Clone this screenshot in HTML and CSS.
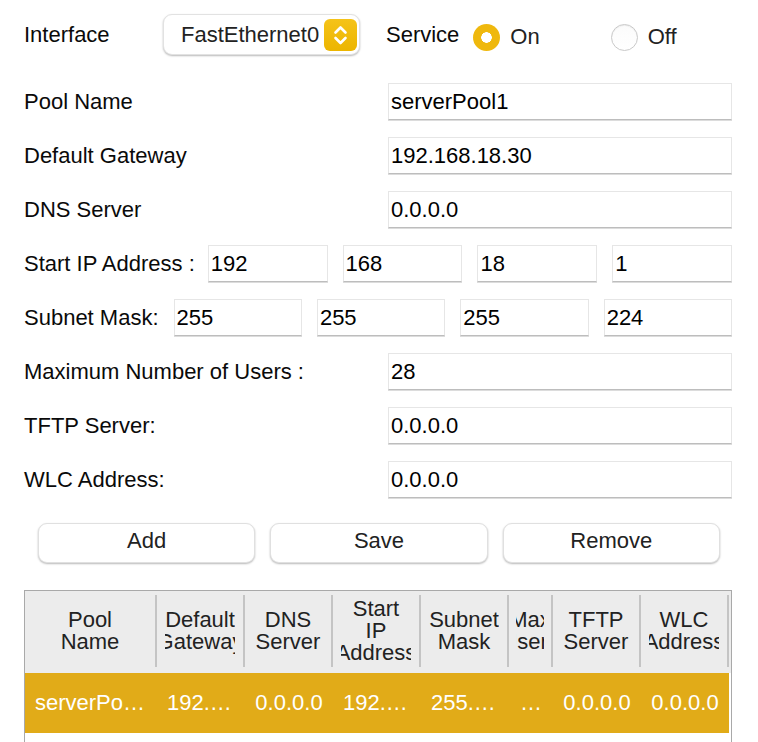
FILE: index.html
```html
<!DOCTYPE html>
<html lang="en">
<head>
<meta charset="utf-8">
<title>DHCP Pool</title>
<link rel="stylesheet" href="styles.css">
</head>
<body>
<div class="page">
  <div class="top">
    <span class="lbl lbl-iface">Interface</span>
    <div class="select">
      <span class="select-text">FastEthernet0</span>
      <span class="stepper">
        <svg width="33" height="32" viewBox="0 0 33 32"><path d="M11.5 13.5 L16.5 8.5 L21.5 13.5 M11.5 19 L16.5 24 L21.5 19" fill="none" stroke="#fff" stroke-width="2.6" stroke-linecap="round" stroke-linejoin="round"/></svg>
      </span>
    </div>
    <span class="lbl lbl-service">Service</span>
    <label class="radio"><span class="dot dot-on"></span>On</label>
    <label class="radio radio-off"><span class="dot dot-off"></span>Off</label>
  </div>

  <div class="form">
    <div class="row"><span class="lbl lbl-wide">Pool Name</span><input class="field" value="serverPool1"></div>
    <div class="row"><span class="lbl lbl-wide">Default Gateway</span><input class="field" value="192.168.18.30"></div>
    <div class="row"><span class="lbl lbl-wide">DNS Server</span><input class="field" value="0.0.0.0"></div>
    <div class="row row-ip">
      <span class="lbl lbl-ip">Start IP Address :</span>
      <div class="octets">
        <input class="field" value="192"><input class="field" value="168"><input class="field" value="18"><input class="field" value="1">
      </div>
    </div>
    <div class="row row-ip">
      <span class="lbl lbl-mask">Subnet Mask:</span>
      <div class="octets">
        <input class="field" value="255"><input class="field" value="255"><input class="field" value="255"><input class="field" value="224">
      </div>
    </div>
    <div class="row"><span class="lbl lbl-wide">Maximum Number of Users :</span><input class="field" value="28"></div>
    <div class="row"><span class="lbl lbl-wide">TFTP Server:</span><input class="field" value="0.0.0.0"></div>
    <div class="row"><span class="lbl lbl-wide">WLC Address:</span><input class="field" value="0.0.0.0"></div>
  </div>

  <div class="buttons">
    <button class="btn">Add</button>
    <button class="btn">Save</button>
    <button class="btn">Remove</button>
  </div>

  <div class="table">
    <div class="thead">
      <div class="th"><div class="th-in"><div class="th-clip"><span>Pool</span><span>Name</span></div></div></div>
      <div class="th"><div class="th-in"><div class="th-clip"><span>Default</span><span>Gateway</span></div></div></div>
      <div class="th"><div class="th-in"><div class="th-clip"><span>DNS</span><span>Server</span></div></div></div>
      <div class="th"><div class="th-in"><div class="th-clip"><span>Start</span><span>IP</span><span>Address</span></div></div></div>
      <div class="th"><div class="th-in"><div class="th-clip"><span>Subnet</span><span>Mask</span></div></div></div>
      <div class="th"><div class="th-in th-in-max"><div class="th-clip"><span>Max</span><span>Users</span></div></div></div>
      <div class="th"><div class="th-in"><div class="th-clip"><span>TFTP</span><span>Server</span></div></div></div>
      <div class="th"><div class="th-in"><div class="th-clip"><span>WLC</span><span>Address</span></div></div></div>
      <div class="th th-rest"></div>
    </div>
    <div class="trow">
      <div class="td">serverPool1</div>
      <div class="td">192.168.18.30</div>
      <div class="td">0.0.0.0</div>
      <div class="td">192.168.18.1</div>
      <div class="td">255.255.255.224</div>
      <div class="td td-max">…</div>
      <div class="td">0.0.0.0</div>
      <div class="td">0.0.0.0</div>
    </div>
    <div class="tfill"></div>
  </div>
</div>
</body>
</html>
```

FILE: styles.css
```css
* { box-sizing: border-box; }

html, body {
  margin: 0;
  padding: 0;
  background: #ffffff;
}

body {
  font-family: "Liberation Sans", Arial, Helvetica, sans-serif;
  font-size: 22px;
  color: #000;
}

.page {
  padding: 14px 26px 0 24px;
}

/* top row */
.top {
  display: flex;
  align-items: center;
  height: 41px;
}

.lbl {
  white-space: nowrap;
  color: #0a0a0a;
}

.lbl-iface {
  width: 139px;
  flex-shrink: 0;
}

.select {
  width: 197px;
  height: 41px;
  flex-shrink: 0;
  display: flex;
  align-items: center;
  justify-content: space-between;
  padding: 0 2px 0 17px;
  background: #fff;
  border: 1px solid #e2e2e2;
  border-radius: 9px;
  box-shadow: 0 1px 2px rgba(0, 0, 0, 0.28);
}

.select-text {
  color: #222;
}

.stepper {
  width: 33px;
  height: 32px;
  border-radius: 6px;
  background: linear-gradient(#f5c319, #ecb500);
  display: flex;
}

.lbl-service {
  margin-left: 26px;
}

.radio {
  display: flex;
  align-items: center;
  margin-top: 5px;
  color: #222;
  margin-left: 14px;
}

.radio-off {
  margin-left: 71px;
}

.dot {
  width: 27px;
  height: 27px;
  border-radius: 50%;
  margin-right: 10px;
  flex-shrink: 0;
}

.dot-on {
  background: radial-gradient(circle, #fff 0 5px, #efb80d 5.5px);
}

.dot-off {
  background: linear-gradient(#fbfbfb, #ffffff);
  border: 1px solid #c9c9c9;
  box-shadow: inset 0 1px 1px rgba(0, 0, 0, 0.06);
}

/* form */
.form {
  margin-top: 28px;
  display: flex;
  flex-direction: column;
  gap: 17px;
}

.row {
  display: flex;
  align-items: center;
  height: 37px;
}

.lbl-wide {
  width: 364px;
  flex-shrink: 0;
}

.lbl-ip,
.lbl-mask {
  flex-shrink: 0;
  margin-right: 13px;
}

.lbl-mask {
  margin-right: 15px;
}

.octets {
  flex: 1 1 0;
  min-width: 0;
  display: flex;
  gap: 15px;
}

.field {
  flex: 1 1 0;
  width: 0;
  min-width: 0;
  height: 37px;
  font: inherit;
  font-size: 22px;
  color: #000;
  padding: 0 2px;
  margin: 0;
  background: #fff;
  border: 1px solid #e6e6e6;
  border-bottom: 1px solid #bdbdbd;
  border-radius: 0;
  box-shadow: 0 1px 0 #dcdcdc;
  outline: none;
}

/* buttons */
.buttons {
  display: flex;
  gap: 15px;
  margin: 25px 12px 0 14px;
}

.btn {
  flex: 1;
  height: 40px;
  font: inherit;
  font-size: 22px;
  color: #222;
  background: #fff;
  border: 1px solid #e0e0e0;
  border-radius: 9px;
  box-shadow: 0 1px 2px rgba(0, 0, 0, 0.28);
  padding: 0 0 4px 0;
}

/* table */
.table {
  margin-top: 27px;
  border: 1px solid #a9a9a9;
  border-bottom: none;
}

.thead,
.trow {
  display: grid;
  grid-template-columns: 132px 88px 88px 88px 88px 44px 88px 88px;
}

.thead {
  grid-template-columns: 132px 88px 88px 88px 88px 44px 88px 88px 1fr;
  background: #ececec;
  height: 82px;
}

.th {
  padding: 4px 0 6px 0;
}

.th-in {
  height: 100%;
  border-right: 2px solid #c4c4c4;
  padding: 0 8px;
  display: flex;
}

.th-in-max {
  padding: 0 7px;
}

.th-clip {
  flex: 1;
  min-width: 0;
  overflow: hidden;
  display: flex;
  flex-direction: column;
  align-items: center;
  justify-content: center;
  color: #222;
  line-height: 22px;
  white-space: nowrap;
}

.trow {
  height: 60px;
}

.td {
  background: #e1ab18;
  color: #fff;
  line-height: 60px;
  padding: 0 10px;
  text-align: center;
  white-space: nowrap;
  overflow: hidden;
  text-overflow: ellipsis;
}

.td-max {
  padding: 0 4px;
}

.tfill {
  height: 40px;
}
```
